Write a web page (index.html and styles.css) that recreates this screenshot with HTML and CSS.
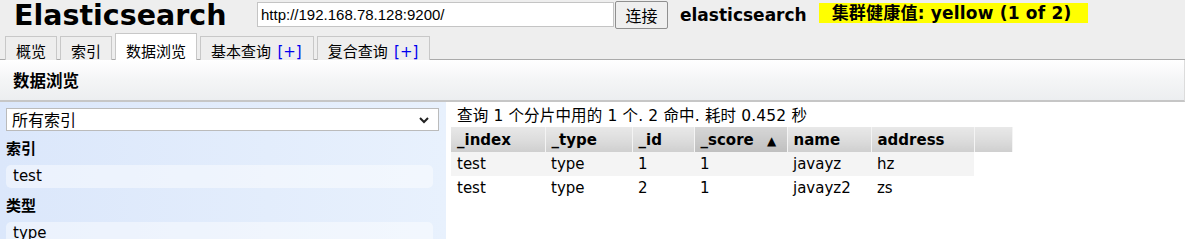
FILE: index.html
```html
<!DOCTYPE html>
<html>
<head>
<meta charset="utf-8">
<link rel="stylesheet" href="styles.css">
</head>
<body>
<div class="top">
  <div class="topbar">
    <h1 class="title">Elasticsearch</h1>
    <input class="url" type="text" value="http://192.168.78.128:9200/">
    <button class="connect">连接</button>
    <span class="cluster">elasticsearch</span>
    <span class="health">集群健康值: yellow (1 of 2)</span>
  </div>
  <div class="tabs">
    <div class="tab">概览</div>
    <div class="tab">索引</div>
    <div class="tab active">数据浏览</div>
    <div class="tab">基本查询 <span class="plus">[+]</span></div>
    <div class="tab">复合查询 <span class="plus">[+]</span></div>
  </div>
</div>
<div class="panelhead">数据浏览</div>
<div class="main">
  <div class="side">
    <div class="select">所有索引<svg class="chev" width="12" height="8" viewBox="0 0 12 8"><path d="M2 2 L6 6 L10 2" fill="none" stroke="#222" stroke-width="2"/></svg></div>
    <div class="label">索引</div>
    <div class="item">test</div>
    <div class="label">类型</div>
    <div class="item">type</div>
  </div>
  <div class="results">
    <div class="summary">查询 1 个分片中用的 1 个. 2 命中. 耗时 0.452 秒</div>
    <table class="grid">
      <thead>
        <tr>
          <th class="c1">_index</th>
          <th class="c2">_type</th>
          <th class="c3">_id</th>
          <th class="c4 sorted">_score <span class="arrow">▲</span></th>
          <th class="c5">name</th>
          <th class="c6">address</th>
          <th class="c7"></th>
        </tr>
      </thead>
      <tbody>
        <tr class="odd"><td>test</td><td>type</td><td>1</td><td>1</td><td>javayz</td><td>hz</td><td class="blank"></td></tr>
        <tr><td>test</td><td>type</td><td>2</td><td>1</td><td>javayz2</td><td>zs</td><td class="blank"></td></tr>
      </tbody>
    </table>
  </div>
</div>
</body>
</html>
```

FILE: styles.css
```css
* { box-sizing: border-box; }
body {
  margin: 0;
  background: #fff;
  font-family: "DejaVu Sans", "Noto Sans CJK SC", sans-serif;
  font-size: 15px;
  color: #000;
}
.top {
  background: #eeeeee;
  border-bottom: 1px solid #aaa;
}
.topbar {
  display: flex;
  align-items: center;
  height: 31px;
  padding-left: 14px;
}
.title {
  margin: 0;
  font-size: 28.5px;
  font-weight: bold;
  line-height: 31px;
  width: 243px;
  letter-spacing: 0;
}
.url {
  width: 357px;
  height: 25px;
  margin: 0;
  border: 1px solid #c4c4c4;
  background: #fff;
  font-family: "Liberation Sans", "Noto Sans CJK SC", sans-serif;
  font-size: 15px;
  padding: 0 3px;
  color: #000;
  align-self: flex-start;
  margin-top: 2px;
}
.connect {
  width: 53px;
  height: 28px;
  margin: 0 0 0 1px;
  padding: 0;
  border: 1px solid #8f8f8f;
  border-radius: 2px;
  background: #efefef;
  font-family: "Noto Sans CJK SC", sans-serif;
  font-size: 16px;
  color: #000;
  align-self: flex-start;
  margin-top: 1px;
}
.cluster {
  margin-left: 12px;
  font-weight: bold;
  font-size: 17px;
  margin-top: -2px;
}
.health {
  margin-left: 12px;
  background: #ffff00;
  height: 20px;
  width: 269px;
  padding-left: 13px;
  font-weight: bold;
  font-size: 17px;
  letter-spacing: 0.2px;
  line-height: 20px;
  margin-top: -5px;
  white-space: nowrap;
}
.tabs {
  display: flex;
  align-items: flex-end;
  gap: 3px;
  padding-left: 5px;
  height: 29px;
  margin-bottom: -1px;
}
.tab {
  height: 24px;
  padding: 0 10px 0 10px;
  border: 1px solid #c8c8c8;
  border-bottom: none;
  background: #eeeeee;
  font-family: "Noto Sans CJK SC", sans-serif;
  font-size: 15px;
  line-height: 28px;
  color: #000;
  white-space: nowrap;
}
.tab.active {
  background: #fff;
  height: 27px;
  line-height: 33px;
  position: relative;
}
.plus {
  color: #0000ee;
  font-family: "DejaVu Sans", sans-serif;
  font-size: 15px;
  margin-left: 3px;
  margin-right: 1px;
}
.panelhead {
  height: 42px;
  background: linear-gradient(to bottom, #ffffff 0%, #f4f5f6 50%, #eceef0 100%);
  border-bottom: 2px solid #c6c6c6;
  border-right: 1px solid #dcdcdc;
  padding-left: 13px;
  font-family: "Noto Sans CJK SC", sans-serif;
  font-weight: bold;
  font-size: 16.5px;
  line-height: 40px;
}
.main {
  display: flex;
}
.side {
  width: 446px;
  min-height: 137px;
  background: linear-gradient(to right, #dbe7fb 0%, #e3edfc 60%, #e8f1fd 100%);
  padding: 6px 7px 0 6px;
}
.select {
  height: 23px;
  background: #fff;
  border: 1px solid #bbb;
  display: flex;
  align-items: center;
  justify-content: space-between;
  padding: 0 8px 0 5px;
  font-family: "Noto Sans CJK SC", sans-serif;
  font-size: 16px;
  line-height: 21px;
}
.chev { margin-top: 1px; }
.label {
  font-family: "Noto Sans CJK SC", sans-serif;
  font-weight: bold;
  font-size: 15px;
  height: 34px;
  line-height: 33px;
}
.item {
  width: 427px;
  height: 23px;
  background: rgba(255, 255, 255, 0.45);
  border-radius: 5px;
  padding-left: 7px;
  line-height: 23px;
  font-size: 15px;
}
.results {
  padding: 6px 0 0 5px;
}
.summary {
  padding-left: 6px;
  height: 19px;
  line-height: 16px;
  font-size: 15.5px;
  letter-spacing: 0.15px;
  white-space: nowrap;
}
.grid {
  border-collapse: collapse;
  font-size: 15px;
}
.grid th {
  height: 25px;
  padding: 0 0 0 6px;
  text-align: left;
  font-weight: bold;
  background: linear-gradient(to bottom, #e8e8e8 0%, #dcdcdc 55%, #cfcfcf 100%);
  border-right: 1px solid #f4f4f4;
  white-space: nowrap;
  vertical-align: middle;
}
.grid th.sorted {
  background: linear-gradient(to bottom, #d6d6d6 0%, #cacaca 55%, #bfbfbf 100%);
}
.arrow { font-size: 12px; margin-left: 8px; }
.c1 { width: 94px; }
.c2 { width: 87px; }
.c3 { width: 62px; }
.c4 { width: 93px; }
.c5 { width: 84px; }
.c6 { width: 103px; }
.c7 { width: 38px; }
.grid td {
  height: 24px;
  padding: 0 0 0 6px;
  white-space: nowrap;
  vertical-align: middle;
}
.grid tr.odd td { background: #f4f4f4; }
.grid tr.odd td.blank { background: transparent; }
```
